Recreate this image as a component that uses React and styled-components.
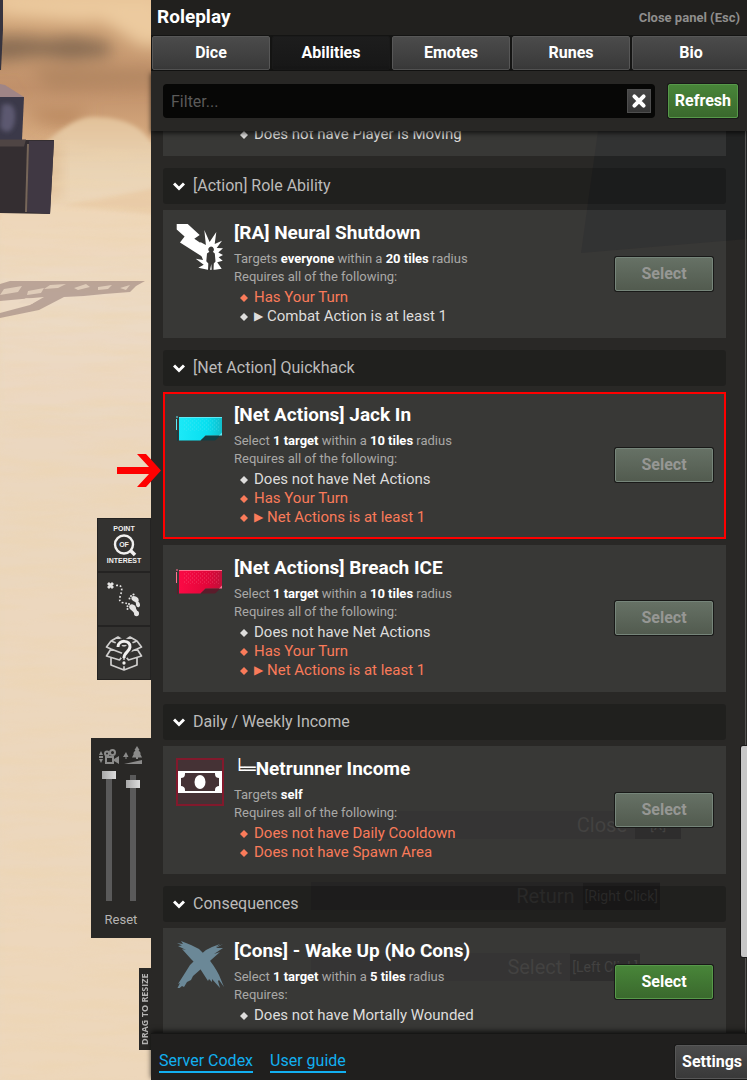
import { useState } from 'react';
import styled, { createGlobalStyle, css } from 'styled-components';

const GlobalStyle = createGlobalStyle`
  * {
    box-sizing: border-box;
  }

  body {
    margin: 0;
    background: #ead7bd;
    color: #dedddc;
    font-family: Roboto, 'Liberation Sans', sans-serif;
    font-size: 16px;
  }

  button, input {
    font-family: inherit;
  }
`;

const Screen = styled.div`
  position: relative;
  display: flex;
  height: 100vh;
  overflow: hidden;
`;

const SceneArt = styled.svg`
  position: absolute;
  inset: 0;
  width: 100%;
  height: 100%;
`;

/* left rail */

const Rail = styled.aside`
  position: relative;
  flex: 0 0 151px;
  display: flex;
  flex-direction: column;
  justify-content: flex-end;
  align-items: flex-end;
  padding-bottom: 30px;
`;

const ToolStack = styled.div`
  display: flex;
  flex-direction: column;
  margin-bottom: 58px;
  background: #242322;
`;

const ToolButton = styled.button`
  display: flex;
  align-items: center;
  justify-content: center;
  width: 54px;
  height: 54px;
  padding: 0;
  border: 1px solid #242322;
  background: #333230;
  color: #f1f0ef;
`;

const SliderBox = styled.div`
  display: flex;
  flex-direction: column;
  align-items: center;
  width: 60px;
  height: 200px;
  margin-bottom: 30px;
  padding: 8px 0;
  background: #292826;
`;

const Sliders = styled.div`
  display: flex;
  gap: 4px;
`;

const SliderColumn = styled.label`
  display: flex;
  flex-direction: column;
  align-items: center;
  gap: 5px;
  width: 20px;
`;

const Range = styled.input`
  appearance: none;
  writing-mode: vertical-lr;
  direction: rtl;
  width: 14px;
  height: 130px;
  margin: 0;
  background: linear-gradient(#5a5a5a, #5a5a5a) center 4px / 6px 100% no-repeat;

  &::-webkit-slider-thumb {
    appearance: none;
    width: 14px;
    height: 8px;
    border: 0;
    background: linear-gradient(to right, #a8a8a8, #dcdcdc);
  }
`;

const ResetButton = styled.button`
  margin-top: 9px;
  padding: 0;
  border: 0;
  background: none;
  color: #b5b4b3;
  font-size: 13px;
  line-height: 20px;
`;

const ResizeTab = styled.div`
  height: 82px;
  width: 12px;
  background: #292826;
  color: #b5b4b3;
  font: bold 9px/12px 'Open Sans', sans-serif;
  text-align: center;
  white-space: nowrap;
  writing-mode: vertical-rl;
  transform: rotate(180deg);
`;

const Pointer = styled.svg`
  position: absolute;
  top: 453px;
  left: 117px;
  z-index: 2;
`;

/* panel */

const Panel = styled.main`
  position: relative;
  flex: 1;
  min-width: 0;
  display: flex;
  flex-direction: column;
  background: #292826;
`;

const PanelHeader = styled.header`
  display: flex;
  align-items: center;
  justify-content: space-between;
  height: 35px;
  padding: 0 7px 2px 6px;
  background: #21201e;
`;

const PanelTitle = styled.h1`
  margin: 0;
  color: #fff;
  font-size: 19px;
  line-height: 24px;
`;

const CloseButton = styled.button`
  padding: 2px 0 0;
  border: 0;
  background: none;
  color: #8f8e8d;
  font-size: 13px;
  font-weight: bold;
`;

const Tabs = styled.nav`
  display: grid;
  grid-template-columns: repeat(5, minmax(120px, 1fr));
  height: 36px;
  overflow: hidden;
  background: #141413;
`;

const Tab = styled.button`
  margin: 1px;
  padding: 0;
  border: 1px solid ${(props) => (props.$active ? '#1a1a1a' : '#575757')};
  border-radius: 2px;
  background: ${(props) => (props.$active
    ? 'linear-gradient(#1d1d1d, #171717)'
    : 'linear-gradient(#4b4b4b, #393939)')};
  color: #fff;
  font-size: 16px;
  font-weight: bold;
  line-height: 20px;
`;

const Toolbar = styled.div`
  position: relative;
  z-index: 1;
  display: flex;
  align-items: center;
  gap: 13px;
  height: 60px;
  padding: 0 9px 0 12px;
  background: #282725;
  box-shadow: 0 2px 5px rgba(0, 0, 0, 0.7);
`;

const FilterBox = styled.div`
  flex: 1;
  display: flex;
  align-items: center;
  height: 34px;
  padding: 0 4px 0 8px;
  border-radius: 4px;
  background: #070706;
`;

const FilterInput = styled.input`
  flex: 1;
  min-width: 0;
  padding: 0;
  border: 0;
  background: none;
  color: #dedddc;
  font-size: 16px;

  &::placeholder {
    color: #5b5a59;
  }
`;

const ClearButton = styled.button`
  display: flex;
  align-items: center;
  justify-content: center;
  width: 24px;
  height: 24px;
  padding: 0;
  border: 1px solid #4e4e4e;
  background: linear-gradient(#464646, #363636);
  color: #fff;
`;

const green = css`
  border-color: #57994a;
  background: linear-gradient(#488539, #3a692d);
  color: #fff;
`;

const faded = css`
  border-color: #76857a;
  background: linear-gradient(#667165, #525b4f);
  color: #969794;
`;

const grey = css`
  border-color: #575757;
  background: linear-gradient(#4b4b4b, #393939);
  color: #fff;
`;

const variants = { green, faded, grey };

const Button = styled.button`
  flex: none;
  min-width: ${(props) => props.$width || 'auto'};
  height: 34px;
  padding: 0 6px;
  border: 1px solid;
  border-radius: 2px;
  box-shadow: 0 0 0 1px #191918;
  font-size: 16px;
  font-weight: bold;
  line-height: 20px;
  ${(props) => variants[props.$variant]}
`;

const Body = styled.div`
  position: relative;
  flex: 1;
  display: flex;
  min-height: 0;
  overflow: hidden;
`;

const List = styled.div`
  position: relative;
  flex: 1;
  min-width: 0;
  padding: 0 15px 0 12px;
`;

const ScrollTrack = styled.div`
  position: relative;
  flex: 0 0 6px;
  border-left: 4px solid transparent;
  background: linear-gradient(#545352, #545352) 0 0 / 1px 100% no-repeat;
`;

const ScrollThumb = styled.div`
  position: absolute;
  top: 615px;
  left: -4px;
  width: 8px;
  height: 211px;
  border-radius: 2px;
  background: #c6c6c6;
  box-shadow: 0 0 0 1px #191918;
`;

const GroupTitle = styled.h2`
  display: flex;
  align-items: center;
  gap: 8px;
  height: 36px;
  margin: 12px 0 6px;
  padding: 0 10px;
  border-radius: 3px;
  background: rgba(0, 0, 0, 0.2);
  color: #bcbbba;
  font-size: 16px;
  font-weight: normal;
  line-height: 20px;
`;

const Card = styled.article`
  display: flex;
  align-items: center;
  gap: 10px;
  margin-bottom: 6px;
  padding: 11px 13px 12px;
  background: rgba(255, 255, 255, 0.075);
  ${(props) => props.$marked && css`
    outline: 2px solid #fe0000;
    outline-offset: -2px;
  `}
`;

/* the card that is half scrolled out under the toolbar */
const ScrolledCard = styled(Card)`
  margin-top: -8px;
  padding: 0 13px 12px 71px;
`;

const CardIcon = styled.svg`
  flex: none;
  align-self: flex-start;
  width: 48px;
  height: 48px;
  margin-top: 1px;
`;

const CardText = styled.div`
  flex: 1;
  min-width: 0;
`;

const CardTitle = styled.h3`
  margin: 0 0 5px;
  color: #fff;
  font-size: 19px;
  line-height: 24px;
`;

const Line = styled.p`
  margin: 0;
  color: #a9a8a6;
  font-size: 13px;
  line-height: 18px;

  b {
    color: #fff;
  }
`;

const Requirements = styled.ul`
  margin: 2px 0 0;
  padding: 0 0 0 20px;
  list-style: none;
`;

const Requirement = styled.li`
  position: relative;
  color: ${(props) => (props.$unmet ? '#fa7b5a' : '#dedddc')};
  font-size: 15px;
  line-height: 19px;

  &::before {
    content: '';
    position: absolute;
    top: 6px;
    left: -14px;
    width: 8px;
    height: 8px;
    background: currentColor;
    clip-path: polygon(50% 0, 100% 50%, 50% 100%, 0 50%);
  }
`;

const Caret = styled.span`
  font-family: 'DejaVu Sans', sans-serif;
  font-size: 12px;
  line-height: 12px;
  vertical-align: 1px;
`;

const TreeMark = styled.span`
  font-family: 'DejaVu Sans', sans-serif;
  font-weight: normal;
  font-size: 18px;
  line-height: 20px;
`;

const Footer = styled.footer`
  position: relative;
  display: flex;
  align-items: center;
  gap: 17px;
  height: 47px;
  padding: 9px 0 0 8px;
  overflow: hidden;
  background: #201f1e;
  border-top: 1px solid #161615;
`;

const FooterShadow = styled.div`
  position: relative;
  z-index: 1;
  box-shadow: 0 -2px 5px rgba(0, 0, 0, 0.7);
`;

const FooterLink = styled.a`
  border-bottom: 2px solid #12aff0;
  color: #12aff0;
  font-size: 16px;
  line-height: 20px;
  text-decoration: none;
`;

const Push = styled.div`
  margin: 0 -2px 0 auto;
`;

/* game hints that show through the panel */

const Backdrop = styled.svg`
  position: absolute;
  inset: 0;
  width: 100%;
  height: 100%;
`;

const Hints = styled.div`
  position: absolute;
  top: 680px;
  left: 160px;
  display: flex;
  flex-direction: column;
  gap: 43px;
  color: #343332;
  font-size: 20px;
`;

const Hint = styled.div`
  display: flex;
  align-items: center;
  justify-content: flex-end;
  gap: 8px;
  width: ${(props) => props.$width};
  height: 28px;
  background: rgba(30, 30, 34, 0.3);
`;

const HintKey = styled.span`
  display: flex;
  align-items: center;
  justify-content: center;
  min-width: 46px;
  height: 27px;
  padding: 0 2px;
  background: rgba(16, 16, 18, 0.35);
  font-size: 14px;
`;

const Chevron = () => (
  <svg width="12" height="10" viewBox="0 0 12 10" fill="none" stroke="#fff" strokeWidth="3" aria-hidden="true">
    <path d="M1 2.500 6 7.500l5-5" />
  </svg>
);

const Cross = () => (
  <svg width="16" height="16" viewBox="0 0 16 16" stroke="currentColor" strokeWidth="4" strokeLinecap="round" aria-hidden="true">
    <path d="m3.400 3.400 9.200 9.200M12.600 3.400l-9.200 9.200" />
  </svg>
);

const ShutdownIcon = () => (
  <CardIcon viewBox="0 0 48 48" fill="#fff" aria-hidden="true">
    <path d="M.7 2h11l12 11-5.400 3.800L29 24l-3 10.500L4 20.400l4.600-5.800L.7 7.400z" />
    <path d="M24.300 20l5.600 3L28.300 8l5.300 12 6.700-10-1.600 12 7.300-3.300-5.300 7.200 6.300.4-4.700 4.200L47 33l-4.300 2.300 4 3.400-5.500 1.500 4.500 6.500-6.700 1h-7.300l-9.400-2 5.400-3-8-6 7.300 1.300-3-8z" />
    <path d="M35 24.500a3 3 0 0 1 1.800 5.300l2 1.700.7 8-1.700 2L37.500 48h-1.800L35.300 42l-1.300 6h-2l.3-6.500-2-2.300.7-7.700 2.400-1.700A3 3 0 0 1 35 24.500z" fill="#393836" />
  </CardIcon>
);

const chipTones = {
  cyan: { base: '#08dff0', glow: '#1ce9f7', edge: '#5fe9f4', fold: '#123f45' },
  red: { base: '#e3063a', glow: '#fb0a45', edge: '#ff7291', fold: '#5a1c2b' }
};

const ChipIcon = ({ tone }) => {
  const c = chipTones[tone];
  return (
    <CardIcon viewBox="0 0 48 48" aria-hidden="true">
      <defs>
        <pattern id={`dots-${tone}`} width="4" height="4" patternUnits="userSpaceOnUse">
          <path d="M0 1h1M2 3h1" stroke={c.edge} strokeWidth="1" opacity=".45" />
        </pattern>
        <linearGradient id={`fill-${tone}`}>
          <stop offset="0" stopColor={c.glow} />
          <stop offset=".65" stopColor={c.base} />
          <stop offset="1" stopColor={c.base} stopOpacity=".8" />
        </linearGradient>
      </defs>
      <path d="M3 13h43v16l-2 2.500H29.500l-5 5H3z" fill={`url(#fill-${tone})`} />
      <path d="M8 15h36v12H8z" fill={`url(#dots-${tone})`} />
      <path d="m24.500 36.500 5.500-4.500h14l-5 4.500z" fill={c.fold} />
      <path d="M0 13h2M3 13.500h43M.5 15v11" stroke={c.edge} fill="none" />
      <path d="M1.500 27v10" stroke={c.fold} />
      <path d="M46 28.500v3h-3z" fill={c.edge} />
    </CardIcon>
  );
};

const MoneyIcon = () => (
  <CardIcon viewBox="0 0 48 48" aria-hidden="true">
    <path d="M1 1h46v46H1z" fill="#453235" stroke="#82192c" strokeWidth="2" />
    <path d="M2 13h44v22H2z" fill="#fff" />
    <path d="M9 15h30v1c0 3 2 4 4 4v8c-2 0-4 1-4 4v1H9v-1c0-3-2-4-4-4v-8c2 0 4-1 4-4z" fill="#453235" />
    <ellipse cx="24" cy="24" rx="5.500" ry="7" fill="#fff" />
  </CardIcon>
);

const ScratchIcon = () => (
  <CardIcon viewBox="0 0 48 48" fill="#6b8897" aria-hidden="true">
    <path d="m1 3 6 1-2-3 10 4 8 4 8 8c5 6 9 12 12 18l5 12-5-7-1 1 2 7-8-9v3l-3-3-1 2-9-14-8-8L6 9l4 1-8-4 4-.500z" />
    <path d="m47 4-7 4 7 0-9 6 6-2-9 8-4 4-6 5-8 7-2 4-4 2-3 5-2-1-6 5 4-8-2 1 7-11 5-8 9-9 7-6 6-3 8-3-4 3z" />
  </CardIcon>
);

const icons = {
  shutdown: <ShutdownIcon />,
  jackIn: <ChipIcon tone="cyan" />,
  breach: <ChipIcon tone="red" />,
  money: <MoneyIcon />,
  scratch: <ScratchIcon />
};

const groups = [
  {
    name: '[Action] Role Ability',
    cards: [{
      title: '[RA] Neural Shutdown',
      icon: 'shutdown',
      target: <>Targets <b>everyone</b> within a <b>20 tiles</b> radius</>,
      requires: 'Requires all of the following:',
      items: [
        { text: 'Has Your Turn', unmet: true },
        { text: 'Combat Action is at least 1', caret: true }
      ]
    }]
  },
  {
    name: '[Net Action] Quickhack',
    cards: [
      {
        title: '[Net Actions] Jack In',
        icon: 'jackIn',
        marked: true,
        target: <>Select <b>1 target</b> within a <b>10 tiles</b> radius</>,
        requires: 'Requires all of the following:',
        items: [
          { text: 'Does not have Net Actions' },
          { text: 'Has Your Turn', unmet: true },
          { text: 'Net Actions is at least 1', unmet: true, caret: true }
        ]
      },
      {
        title: '[Net Actions] Breach ICE',
        icon: 'breach',
        target: <>Select <b>1 target</b> within a <b>10 tiles</b> radius</>,
        requires: 'Requires all of the following:',
        items: [
          { text: 'Does not have Net Actions' },
          { text: 'Has Your Turn', unmet: true },
          { text: 'Net Actions is at least 1', unmet: true, caret: true }
        ]
      }
    ]
  },
  {
    name: 'Daily / Weekly Income',
    cards: [{
      title: 'Netrunner Income',
      mark: '╘═',
      icon: 'money',
      target: <>Targets <b>self</b></>,
      requires: 'Requires all of the following:',
      items: [
        { text: 'Does not have Daily Cooldown', unmet: true },
        { text: 'Does not have Spawn Area', unmet: true }
      ]
    }]
  },
  {
    name: 'Consequences',
    cards: [{
      title: '[Cons] - Wake Up (No Cons)',
      icon: 'scratch',
      enabled: true,
      target: <>Select <b>1 target</b> within a <b>5 tiles</b> radius</>,
      requires: 'Requires:',
      items: [{ text: 'Does not have Mortally Wounded' }]
    }]
  }
];

const AbilityCard = ({ card }) => (
  <Card $marked={card.marked}>
    {icons[card.icon]}
    <CardText>
      <CardTitle>{card.mark && <TreeMark>{card.mark}</TreeMark>}{card.title}</CardTitle>
      <Line>{card.target}</Line>
      <Line>{card.requires}</Line>
      <Requirements>
        {card.items.map((item) => (
          <Requirement key={item.text} $unmet={item.unmet}>
            {item.caret && <Caret>▶ </Caret>}{item.text}
          </Requirement>
        ))}
      </Requirements>
    </CardText>
    <Button $width="98px" $variant={card.enabled ? 'green' : 'faded'} disabled={!card.enabled}>
      Select
    </Button>
  </Card>
);

const Scene = () => (
  <SceneArt viewBox="0 0 747 1080" preserveAspectRatio="xMinYMin slice" aria-hidden="true">
    <defs>
      <linearGradient id="sky" x2="0" y2="1">
        <stop offset="0" stopColor="#e3bc8f" />
        <stop offset=".14" stopColor="#cda176" />
        <stop offset=".4" stopColor="#c0906a" />
        <stop offset=".6" stopColor="#d3a67c" />
        <stop offset="1" stopColor="#ecd0ad" />
      </linearGradient>
      <linearGradient id="sand" x2="0" y2="1">
        <stop offset="0" stopColor="#efd7b8" />
        <stop offset=".1" stopColor="#ecdac5" />
        <stop offset=".3" stopColor="#ebd7bf" />
        <stop offset="1" stopColor="#edd7bb" />
      </linearGradient>
      <linearGradient id="dome" x2="0" y2="1">
        <stop offset="0" stopColor="#e2c199" />
        <stop offset=".5" stopColor="#e9d3b4" />
        <stop offset="1" stopColor="#eed9bd" />
      </linearGradient>
      <filter id="soft" x="-50%" y="-50%" width="200%" height="200%">
        <feGaussianBlur stdDeviation="8" />
      </filter>
      <filter id="fine" x="-20%" y="-20%" width="140%" height="140%">
        <feGaussianBlur stdDeviation="2" />
      </filter>
      <filter id="ripples" x="0" y="0" width="100%" height="100%">
        <feTurbulence type="fractalNoise" baseFrequency=".012 .09" numOctaves="3" seed="8" />
        <feColorMatrix values="0 0 0 0 .85  0 0 0 0 .66  0 0 0 0 .42  1.600 0 0 0 -.600" />
      </filter>
    </defs>
    <path d="M0 0h160v220H0z" fill="url(#sky)" />
    <g filter="url(#soft)">
      <path d="M0 -5h160v18L80 20 0 12z" fill="#ecca9f" />
      <path d="M-10 38c40-4 50 4 70 0s40 6 50 4v14l-40 4-30-4-50 6z" fill="#7d634d" opacity=".85" />
      <path d="M90 10h80v36h-30z" fill="#ecca9f" />
      <path d="M30 68 160 70v14l-110 4z" fill="#b08560" />
      <path d="M30 110h60l-20 16-30-4z" fill="#b07e55" opacity=".7" />
    </g>
    <path d="M44 218v-74c14-12 30-26 48-27 30 0 48 8 60 26l20 30v45z" fill="url(#dome)" filter="url(#fine)" />
    <path d="M40 200V150l20-14v64z" fill="#d9b083" opacity=".6" filter="url(#soft)" />
    <path d="M0 212 60 206l100 8v867H0z" fill="url(#sand)" filter="url(#fine)" />
    <path d="M60 205l40-6 60-12v28z" fill="#e8c7a0" filter="url(#fine)" opacity=".7" />
    <path d="M0 140h160v940H0z" filter="url(#ripples)" opacity=".55" />
    <path d="M0 284l10-3h135l-9 5-6 6-26 2-20 2-20 1-25 13-39 8v-5l30-8 14-8-44 4z" fill="#a58d85" opacity=".7" />
    <path d="M4 289l18-3-4 6-18 3zM28 291l16-3-3 5-14 2zM50 285l16-1-8 4-14 1zM74 288l12-4 4 3-12 3zM98 287l14-2-4 4-10 1zM120 288l10-3-4 5zM18 303l8-5 12 1-6 5z" fill="#e9d6c2" opacity=".8" />
    <path d="M0 0h3v30L1 70H0z" fill="#37343f" />
    <path d="m0 84 5 1 19 12H0z" fill="#9f8586" />
    <path d="M0 97h24l-2 43H0z" fill="#3b3949" />
    <path d="M2 105c8-3 14 0 13 14s-10 16-15 8z" fill="#5b5870" filter="url(#fine)" />
    <path d="M0 140h54l-4 74-50-1z" fill="#342e31" />
    <path d="M29 141h25l-4 73-23-2z" fill="#403843" />
    <path d="M0 139.500h26l-2 7H0z" fill="#4f4544" />
    <path d="m28 144-2 68" stroke="#766659" strokeWidth="2" />
  </SceneArt>
);

const PoiIcon = () => (
  <svg width="40" height="42" viewBox="0 0 40 42" fill="#f1f0ef" fontFamily="'Liberation Sans', sans-serif" fontWeight="bold" fontSize="7" textAnchor="middle" aria-hidden="true">
    <text x="20" y="7">POINT</text>
    <circle cx="20" cy="20.500" r="9" fill="none" stroke="#f1f0ef" strokeWidth="2.400" />
    <path d="m26 26 5 5" stroke="#f1f0ef" strokeWidth="3.500" />
    <text x="20" y="23">OF</text>
    <text x="20" y="39">INTEREST</text>
  </svg>
);

const TrailIcon = () => (
  <svg width="36" height="40" viewBox="0 0 36 40" fill="#e4e3e2" aria-hidden="true">
    <path d="m2 4 5 5M7 4 2 9" stroke="#e4e3e2" strokeWidth="2.800" />
    <path d="M10 6.500c7-1 6 4 5 8s-3 7 1 9l5 1" fill="none" stroke="#e4e3e2" strokeWidth="1.700" strokeDasharray="1.700 2" />
    <ellipse cx="29" cy="20" rx="3.800" ry="2.600" transform="rotate(30 29 20)" />
    <ellipse cx="32" cy="25.500" rx="2" ry="2.800" transform="rotate(-15 32 25.500)" />
    <path d="M28.500 21l2 4.500 2.500-4z" />
    <ellipse cx="26.500" cy="28.500" rx="3.500" ry="2.800" transform="rotate(40 26.500 28.500)" />
    <ellipse cx="30.500" cy="34.500" rx="2.500" ry="2.800" />
    <path d="m25 30.500 3.500 4 3-2-2-4z" />
    <circle cx="23.500" cy="19.500" r="1" />
    <circle cx="25" cy="17" r="1" />
    <circle cx="27.500" cy="15.500" r="1.100" />
    <circle cx="21.500" cy="30" r="1" />
    <circle cx="21.500" cy="27.300" r="1" />
    <circle cx="23" cy="25" r="1.100" />
  </svg>
);

const MysteryIcon = () => (
  <svg width="38" height="38" viewBox="0 0 38 38" fill="none" stroke="#cfcecd" strokeWidth="1.700" strokeLinejoin="round" aria-hidden="true">
    <path d="m19 12-13-5-4.500 6L6 15l-4.500 7 13 4L19 20M19 12l13-5 4.500 6L32 15l4.500 7-13 4L19 20M6 7l7-4 6 4 6-4 7 4M6 15l13 5 13-5M6 24v7l13 5 13-5v-7M19 20v16" />
    <path d="M13 13c0-8 13-7 12 0-.500 5-6 5-6 11" stroke="#333230" strokeWidth="6.500" />
    <path d="M13 13c0-8 13-7 12 0-.500 5-6 5-6 11" stroke="#f1f0ef" strokeWidth="3" />
    <circle cx="19" cy="29" r="2.500" fill="#f1f0ef" stroke="#333230" />
  </svg>
);

const CameraIcon = () => (
  <svg width="20" height="20" viewBox="0 0 20 20" fill="#8b8b8a" aria-hidden="true">
    <path d="m0 9 2-4 2 4zM0 13l2 4 2-4zM0 10h4v2H0z" />
    <path d="M6 10h9v8H6zM15 13l5-3v8l-5-3z" />
    <path d="M8 12h5v4H8z" fill="#292826" />
    <circle cx="8" cy="7.500" r="2" fill="none" stroke="#8b8b8a" strokeWidth="2" />
    <circle cx="13.500" cy="6.500" r="2.500" fill="none" stroke="#8b8b8a" strokeWidth="2" />
  </svg>
);

const TreesIcon = () => (
  <svg width="20" height="20" viewBox="0 0 20 20" fill="#8b8b8a" aria-hidden="true">
    <path d="m14 0 2.500 4h-1l2.500 3.500h-1l2 4h-4V13h-2v-1.500H9l2-4h-1L12.500 4h-1zM3 6l2.500 5h-2v2h-1v-2H0z" />
    <path d="M1 18 19 14v4z" />
  </svg>
);

export default function App() {
  const [tab, setTab] = useState('Abilities');
  const [filter, setFilter] = useState('');

  return (
    <Screen>
      <GlobalStyle />
      <Scene />
      <Rail>
        <ToolStack>
          <ToolButton aria-label="Point of interest"><PoiIcon /></ToolButton>
          <ToolButton aria-label="Trail"><TrailIcon /></ToolButton>
          <ToolButton aria-label="Mystery box"><MysteryIcon /></ToolButton>
        </ToolStack>
        <SliderBox>
          <Sliders>
            <SliderColumn>
              <CameraIcon />
              <Range type="range" aria-label="Camera height" defaultValue="100" />
            </SliderColumn>
            <SliderColumn>
              <TreesIcon />
              <Range type="range" aria-label="Scenery distance" defaultValue="93" />
            </SliderColumn>
          </Sliders>
          <ResetButton>Reset</ResetButton>
        </SliderBox>
        <ResizeTab>DRAG TO RESIZE</ResizeTab>
      </Rail>
      <Pointer width="44" height="34" viewBox="0 0 44 34" fill="#fe0000" aria-hidden="true">
        <path d="M0 14h32L20 1h9l15 16.500L29 34h-9l12-13H0z" />
      </Pointer>

      <Panel>
        <PanelHeader>
          <PanelTitle>Roleplay</PanelTitle>
          <CloseButton>Close panel (Esc)</CloseButton>
        </PanelHeader>
        <Tabs>
          {['Dice', 'Abilities', 'Emotes', 'Runes', 'Bio'].map((name) => (
            <Tab key={name} $active={name === tab} onClick={() => setTab(name)}>{name}</Tab>
          ))}
        </Tabs>
        <Toolbar>
          <FilterBox>
            <FilterInput
              aria-label="Filter"
              placeholder="Filter..."
              value={filter}
              onChange={(e) => setFilter(e.target.value)} />
            <ClearButton aria-label="Clear filter" onClick={() => setFilter('')}><Cross /></ClearButton>
          </FilterBox>
          <Button $variant="green">Refresh</Button>
        </Toolbar>
        <Body>
          <Backdrop viewBox="0 0 596 902" preserveAspectRatio="xMaxYMin slice" aria-hidden="true">
            <path d="M447 0h149v108l-166 14z" fill="#1c1d20" opacity=".5" />
          </Backdrop>
          <Hints aria-hidden="true">
            <Hint $width="370px">Close <HintKey>[X]</HintKey></Hint>
            <Hint $width="349px">Return <HintKey>[Right Click]</HintKey></Hint>
            <Hint $width="329px">Select <HintKey>[Left Click]</HintKey></Hint>
          </Hints>
          <List>
            <ScrolledCard>
              <Requirements>
                <Requirement>Does not have Player is Moving</Requirement>
              </Requirements>
            </ScrolledCard>
            {groups.map((group) => (
              <section key={group.name}>
                <GroupTitle><Chevron />{group.name}</GroupTitle>
                {group.cards.map((card) => <AbilityCard key={card.title} card={card} />)}
              </section>
            ))}
          </List>
          <ScrollTrack><ScrollThumb /></ScrollTrack>
        </Body>
        <FooterShadow>
          <Footer>
            <FooterLink href="#codex">Server Codex</FooterLink>
            <FooterLink href="#guide">User guide</FooterLink>
            <Push><Button $variant="grey">Settings</Button></Push>
          </Footer>
        </FooterShadow>
      </Panel>
    </Screen>
  );
}
